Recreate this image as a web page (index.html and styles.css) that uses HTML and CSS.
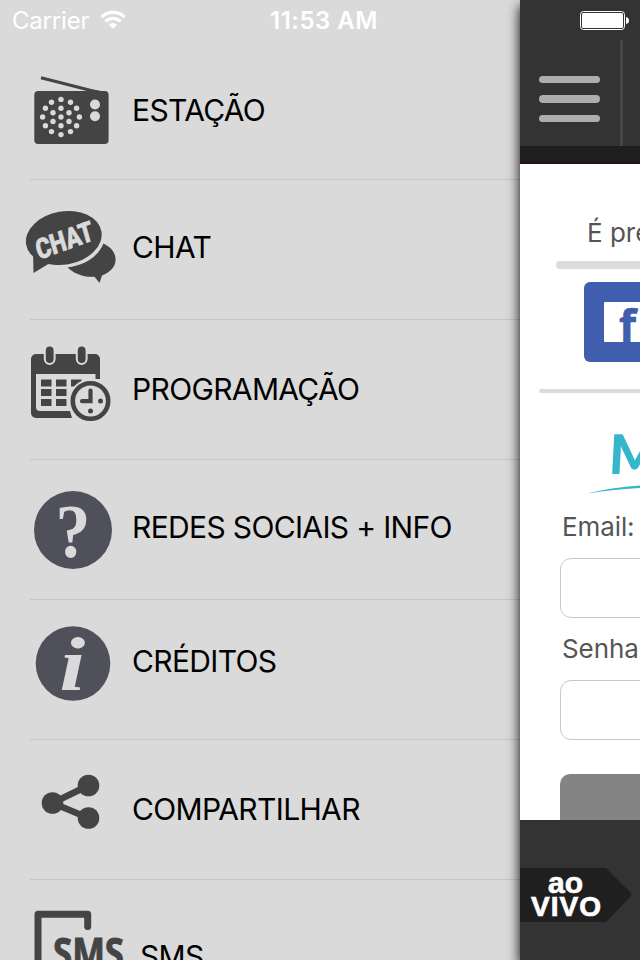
FILE: index.html
```html
<!DOCTYPE html>
<html lang="pt-BR">
<head>
  <meta charset="UTF-8">
  <title>Menu</title>
  <meta name="viewport" content="width=device-width, initial-scale=1.0">
  <link rel="stylesheet" href="styles.css">
</head>
<body>
  <nav class="menu">
    <div class="status-bar">
      <span class="carrier">Carrier</span>
      <svg class="wifi" width="26" height="20" viewBox="0 0 26 20">
        <g fill="none" stroke="#fff" stroke-width="3.2">
          <path d="M1.4 7.2a16.3 16.3 0 0 1 23.2 0"/>
          <path d="M5.5 11.4a10.6 10.6 0 0 1 15 0"/>
        </g>
        <path d="M8.8 14.6a6 6 0 0 1 8.4 0L13 19z" fill="#fff"/>
      </svg>
      <span class="time">11:53 AM</span>
    </div>

    <ul class="menu-list">
      <li class="menu-item">
        <svg class="icon" width="100" height="139" viewBox="30 0 100 139">
          <path d="M41 37.700L99 52.500" stroke="#444" stroke-width="3"/>
          <path d="M90 51L94 49.800L104 51.500z" fill="#444"/>
          <rect x="34.300" y="51" width="74.300" height="53" rx="4" fill="#444"/>
          <g fill="#dadada">
            <circle cx="95" cy="64.500" r="5"/><circle cx="95" cy="76.300" r="5"/>
            <circle cx="61" cy="59.400" r="2.700"/><circle cx="51.500" cy="62.200" r="2.700"/><circle cx="70.500" cy="62.200" r="2.700"/>
            <circle cx="45.400" cy="68.200" r="2.700"/><circle cx="61" cy="68.200" r="2.700"/><circle cx="76.600" cy="68.200" r="2.700"/>
            <circle cx="53" cy="72.700" r="2.700"/><circle cx="69" cy="72.700" r="2.700"/>
            <circle cx="42.600" cy="77" r="2.700"/><circle cx="61" cy="77" r="2.700"/><circle cx="79.400" cy="77" r="2.700"/>
            <circle cx="53" cy="81.500" r="2.700"/><circle cx="69" cy="81.500" r="2.700"/>
            <circle cx="45.400" cy="85.800" r="2.700"/><circle cx="61" cy="85.800" r="2.700"/><circle cx="76.600" cy="85.800" r="2.700"/>
            <circle cx="51.500" cy="91.600" r="2.700"/><circle cx="70.500" cy="91.600" r="2.700"/><circle cx="61" cy="94.600" r="2.700"/>
          </g>
        </svg>
        <span class="label label-station">ESTAÇÃO</span>
      </li>

      <li class="menu-item">
        <svg class="icon" width="100" height="139" viewBox="30 0 100 139">
          <path d="M103.500 63.500C111 67 115.800 73 115.600 80C115.400 87 110 92.500 102 95.500L99.500 103L94.500 96.800C83 97.500 73 93 67.500 87.500C84 85.500 98 77 103.500 63.500z" fill="#444"/>
          <ellipse cx="63.800" cy="58" rx="38.200" ry="26.600" transform="rotate(-10 63.800 58)" fill="#444"/>
          <path d="M33 72L33.500 93L50 83z" fill="#444"/>
          <text class="chat-text" transform="translate(39 80) rotate(-20) skewX(-4)" textLength="60" lengthAdjust="spacingAndGlyphs">CHAT</text>
        </svg>
        <span class="label label-chat">CHAT</span>
      </li>

      <li class="menu-item">
        <svg class="icon" width="100" height="139" viewBox="30 0 100 139">
          <path d="M36 34h59a5 5 0 0 1 5 5v20h-4.500v-5h-59.500v33a4 4 0 0 0 4 4h30l2 7h-36a5 5 0 0 1-5-5v-54a5 5 0 0 1 5-5z" fill="#444"/>
          <g fill="#444" stroke="#dadada" stroke-width="2">
            <rect x="44.800" y="25.500" width="9.800" height="18.500" rx="4.900"/>
            <rect x="76.800" y="25.500" width="9.800" height="18.500" rx="4.900"/>
          </g>
          <path d="M41 59.500h10.500v7H41zM56 59.500h10.500v7H56zM71 59.500h10.500v7H71zM41 69h10.500v7H41zM56 69h10.500v7H56zM41 79h10.500v7H41zM56 79h10.500v7H56z" fill="#444"/>
          <circle cx="90.500" cy="81" r="22" fill="#dadada"/>
          <circle cx="90.500" cy="81" r="17.700" fill="none" stroke="#444" stroke-width="4.600"/>
          <path d="M90.500 70.500v10.700h-8.500" fill="none" stroke="#444" stroke-width="4.200" stroke-linecap="round"/>
          <circle cx="100.500" cy="81" r="2.500" fill="#444"/>
          <circle cx="90.500" cy="91" r="2.500" fill="#444"/>
        </svg>
        <span class="label label-schedule">PROGRAMAÇÃO</span>
      </li>

      <li class="menu-item">
        <svg class="icon" width="100" height="139" viewBox="30 0 100 139">
          <circle cx="73" cy="70" r="39" fill="#50505a"/>
          <text class="question-text" transform="translate(73 96.500) scale(.92 1)">?</text>
        </svg>
        <span class="label label-social">REDES SOCIAIS + INFO</span>
      </li>

      <li class="menu-item">
        <svg class="icon" width="100" height="139" viewBox="30 0 100 139">
          <circle cx="73" cy="63.500" r="37.300" fill="#50505a"/>
          <text class="info-text" transform="translate(72.500 89.500) scale(1.220 1)">i</text>
        </svg>
        <span class="label label-credits">CRÉDITOS</span>
      </li>

      <li class="menu-item">
        <svg class="icon" width="100" height="139" viewBox="30 0 100 139">
          <path d="M88.500 45.500L52.500 63L88.500 78" fill="none" stroke="#444" stroke-width="6.500"/>
          <circle cx="88.500" cy="45.500" r="10.800" fill="#444"/>
          <circle cx="52.500" cy="63" r="10.800" fill="#444"/>
          <circle cx="88.500" cy="78" r="10.800" fill="#444"/>
        </svg>
        <span class="label label-share">COMPARTILHAR</span>
      </li>

      <li class="menu-item">
        <svg class="icon" width="100" height="139" viewBox="30 0 100 139">
          <path d="M38 139V34.200H87.700V46.500" fill="none" stroke="#444" stroke-width="7" stroke-linecap="round" stroke-linejoin="round"/>
          <text class="sms-text" x="53" y="88" textLength="71" lengthAdjust="spacingAndGlyphs">SMS</text>
        </svg>
        <span class="label label-sms">SMS</span>
      </li>
    </ul>
  </nav>

  <main class="panel">
    <header class="top">
      <svg class="battery" width="50" height="20" viewBox="0 0 50 20">
        <rect x=".5" y=".5" width="44" height="18" rx="3" fill="none" stroke="#fff"/>
        <rect x="2" y="2" width="41" height="15" rx="1.500" fill="#fff"/>
        <path d="M46 6q3 .5 3 3.500t-3 3.500z" fill="#fff"/>
      </svg>
      <div class="toolbar">
        <div class="hamburger"><i></i><i></i><i></i></div>
      </div>
    </header>

    <section class="login">
      <p class="notice">É preciso</p>
      <div class="bar"></div>
      <div class="facebook">
        <svg width="60" height="40" viewBox="0 0 60 40">
          <rect width="60" height="40" rx="1" fill="#fff"/>
          <text class="fb-text" x="15" y="40">f</text>
        </svg>
      </div>
      <div class="bar bar-thin"></div>
      <svg class="logo" width="80" height="74" viewBox="0 0 80 74">
        <text class="logo-text" transform="translate(20 53.500) skewX(-3)">M</text>
        <path d="M-1 73.500Q30 66 70 64.500V67Q30 68.500 -1 73.500z" fill="#35b6cd"/>
      </svg>
      <label class="field-label" for="email">Email:</label>
      <input class="field" type="text" id="email">
      <label class="field-label" for="senha">Senha:</label>
      <input class="field" type="password" id="senha">
      <button class="submit"></button>
    </section>

    <footer class="player">
      <svg width="120" height="54" viewBox="0 0 120 54">
        <path d="M0 0H86L110.500 24.500Q112 26.500 110.500 28.500L86 54H0z" fill="#1f1f1f"/>
        <text class="live-text live-top" x="28" y="25" textLength="35">ao</text>
        <text class="live-text live-bottom" x="11" y="47.500" textLength="70">VIVO</text>
      </svg>
    </footer>
  </main>
</body>
</html>
```
FILE: styles.css
```css
* {
  box-sizing: border-box;
}

body {
  margin: 0;
  display: flex;
  width: 640px;
  height: 960px;
  overflow: hidden;
  background-color: #dadada;
  font-family: Inter, "Liberation Sans", sans-serif;
}

.menu {
  width: 520px;
  height: 960px;
  overflow: hidden;
}

.status-bar {
  display: flex;
  height: 40px;
  padding-left: 12px;
  color: #fff;
  font-size: 24px;
  line-height: 41px;
}

.carrier {
  width: 88px;
  letter-spacing: -0.2px;
}

.wifi {
  margin-top: 10px;
}

.time {
  margin-left: 144px;
  font-weight: 600;
  letter-spacing: 0.5px;
  white-space: nowrap;
}

.menu-list {
  list-style: none;
  margin: 0;
  padding: 0 0 0 30px;
}

.menu-item {
  display: flex;
  align-items: flex-start;
  height: 140px;
  border-bottom: 1px solid #c6c6c8;
}

.icon {
  flex: none;
  overflow: visible;
}

.label {
  padding-left: 2px;
  color: #000;
  font-size: 30px;
  line-height: 36px;
  letter-spacing: -0.65px;
  white-space: nowrap;
}

.label-station { margin-top: 52px; }
.label-chat { margin-top: 49px; }
.label-schedule { margin-top: 51px; }
.label-social { margin-top: 49px; }
.label-credits { margin-top: 43px; }
.label-share { margin-top: 51px; }

.label-sms {
  margin-top: 58px;
  margin-left: 8px;
}

.chat-text {
  fill: #dadada;
  stroke: #dadada;
  stroke-width: 0.6px;
  font: 900 28px Roboto, sans-serif;
}

.question-text {
  fill: #dadada;
  font: 700 76px "Liberation Serif", serif;
  text-anchor: middle;
}

.info-text {
  fill: #dadada;
  font: italic 700 76px "Liberation Serif", serif;
  text-anchor: middle;
}

.sms-text {
  fill: #444;
  stroke: #444;
  stroke-width: 1px;
  font: 700 42px "Open Sans", sans-serif;
}

/* Content pushed to the right by the menu */
.panel {
  display: flex;
  flex-direction: column;
  width: 120px;
  height: 960px;
  background-color: #fff;
  box-shadow: 0 6px 12px #000;
}

.top {
  height: 164px;
  background-color: #333;
  border-bottom: 2px solid #2e0e10;
}

.battery {
  display: block;
  margin: 11px 0 9px 60px;
}

.toolbar {
  height: 122px;
  border-bottom: 16px solid #1f1f1f;
}

.hamburger {
  display: flex;
  flex-direction: column;
  gap: 12px;
  width: 103px;
  height: 106px;
  padding: 36px 0 0 19px;
  border-right: 3px solid #464646;
}

.hamburger i {
  width: 61px;
  height: 7.4px;
  border-radius: 4px;
  background-color: #adadad;
}

.login {
  height: 656px;
  overflow: hidden;
  color: #555;
  font-size: 26px;
  line-height: 32px;
  white-space: nowrap;
}

.notice {
  margin: 53px 0 0 67px;
}

.bar {
  height: 8px;
  margin: 12px -10px 0 36px;
  border-radius: 4px;
  background-color: #dcdcdc;
}

.facebook {
  height: 80px;
  margin: 13px -10px 0 64px;
  padding: 20px;
  border-radius: 6px;
  background-color: #415dae;
}

.facebook svg {
  display: block;
}

.fb-text {
  fill: #415dae;
  stroke: #415dae;
  stroke-width: 0.6px;
  font: 700 44px "Open Sans", sans-serif;
}

.bar-thin {
  height: 4px;
  margin: 27px -10px 0 19px;
}

.logo {
  display: block;
  margin: 27px 0 0 68px;
  height: 74px;
  overflow: visible;
}

.logo-text {
  fill: #35b6cd;
  font: 900 55px Lato, sans-serif;
}

.field-label {
  display: block;
  margin: 17px 0 0 42px;
  letter-spacing: -0.1px;
}

.field {
  display: block;
  width: 120px;
  height: 60px;
  margin: 15px 0 0 40px;
  border: 1px solid #c8c8c8;
  border-radius: 11px;
  background-color: #fff;
}

.field + .field-label {
  margin-top: 15px;
}

.submit {
  display: block;
  width: 120px;
  height: 80px;
  margin: 34px 0 0 40px;
  border: none;
  border-radius: 10px;
  background-color: #848484;
}

.player {
  height: 140px;
  padding-top: 48px;
  background-color: #333;
}

.player svg {
  display: block;
}

.live-text {
  fill: #fff;
  stroke: #fff;
  stroke-width: 0.7px;
  font-family: "Liberation Sans", sans-serif;
  font-weight: 700;
}

.live-top {
  font-size: 30px;
}

.live-bottom {
  font-size: 28px;
}
```
